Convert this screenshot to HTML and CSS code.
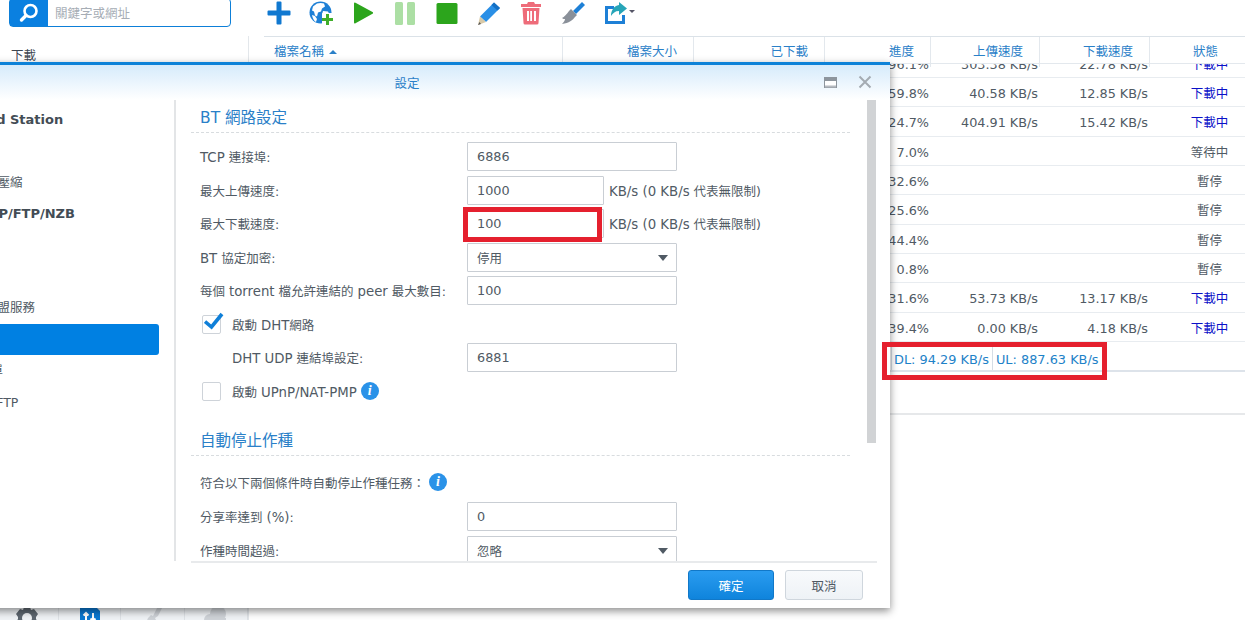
FILE: index.html
```html
<!DOCTYPE html>
<html lang="zh-Hant">
<head>
<meta charset="utf-8">
<title>Download Station</title>
<link rel="stylesheet" href="styles.css">
</head>
<body>
<div class="app">
  <header class="topbar">
    <div class="search">
      <span class="search-btn"><svg width="22" height="22" viewBox="0 0 22 22"><circle cx="12.5" cy="9" r="6" fill="none" stroke="#fff" stroke-width="2.6"/><path d="M8 13.5 3.5 18" stroke="#fff" stroke-width="3.4" stroke-linecap="round"/></svg></span>
      <span class="search-text">關鍵字或網址</span>
    </div>
    <nav class="tools">
      <span class="tool"><svg width="24" height="24" viewBox="0 0 24 24"><path d="M9.5 1.5a1 1 0 0 1 1-1h3a1 1 0 0 1 1 1v8h8a1 1 0 0 1 1 1v3a1 1 0 0 1-1 1h-8v8a1 1 0 0 1-1 1h-3a1 1 0 0 1-1-1v-8h-8a1 1 0 0 1-1-1v-3a1 1 0 0 1 1-1h8z" fill="#1078d0"/></svg></span>
      <span class="tool"><svg width="24" height="24" viewBox="0 0 24 24"><circle cx="11.5" cy="11.5" r="11" fill="#1e80d6"/><path d="M8 2.500c2-.7 5-.8 7 0l1 3-3 2-1 3-3 1-1 4-2-1-1-4-2-1 1-4zM14 10l5 .5 1.500 3-3 4-2.500 2-1-3-1-3zM3 14l3 1 2 3-1 3c-2-1-3.500-4-4-7z" fill="#fff"/><rect x="13" y="12" width="11" height="12" rx="1" fill="#fff"/><path d="M17 13h3v4h4v3h-4v4h-3v-4h-4v-3h4z" fill="#3fae2a"/></svg></span>
      <span class="tool"><svg width="24" height="24" viewBox="0 0 24 24"><path d="M3 2.500a1 1 0 0 1 1.500-.8l17 9.300a1 1 0 0 1 0 1.800l-17 9.500a1 1 0 0 1-1.500-.8z" fill="#2ca51c"/></svg></span>
      <span class="tool"><svg width="24" height="24" viewBox="0 0 24 24"><rect x="2" y="1" width="8" height="23" rx="1.500" fill="#acdfa4"/><rect x="14" y="1" width="8" height="23" rx="1.500" fill="#acdfa4"/></svg></span>
      <span class="tool"><svg width="24" height="24" viewBox="0 0 24 24"><rect x="1.500" y="2" width="21" height="21" rx="1.500" fill="#2ca51c"/></svg></span>
      <span class="tool"><svg width="24" height="24" viewBox="0 0 24 24"><path d="M17 1.500 23 7 9 21 3 15.500z" fill="#2a8fe6"/><path d="M17 1.500 23 7l-2.500 2.500L14.500 4z" fill="#1470c4"/><path d="M3 15.500 9 21l-8 3z" fill="#d8c9a8"/><path d="M2.500 21 1 24l3-1z" fill="#555"/></svg></span>
      <span class="tool"><svg width="24" height="24" viewBox="0 0 24 24"><path d="M9 1h6l1 2h6v3H2V3h6z" fill="#ee6c7a"/><path d="M3.500 7h17l-1 15a1.500 1.500 0 0 1-1.500 1.500H6A1.500 1.500 0 0 1 4.500 22zM8 10v10h2V10zm3.200 0v10h1.800V10zM15 10v10h2V10z" fill="#ee6c7a" fill-rule="evenodd"/></svg></span>
      <span class="tool"><svg width="24" height="24" viewBox="0 0 24 24"><path d="M21 1l3 3-9 9-3-3z" fill="#1e80d6"/><path d="M10 8l6 6-2 2c-2 3-6 6-13 7 2-2 3-4 3-5-1 0-2 0-3-1 2-1 5-4 7-7z" fill="#8a9099"/></svg></span>
      <span class="tool tool-wide"><svg width="32" height="24" viewBox="0 0 32 24"><path d="M3 5h8v3H5v12h14v-6h3v9H2V5z" fill="#1e80d6"/><path d="M16 1l8 6.500-8 6.500v-4c-4 0-6 2-8 5 0-6 3-10 8-11z" fill="#27a5b8"/><path d="M26 9h6l-3 3z" fill="#556"/></svg></span>
    </nav>
  </header>

  <div class="workspace">
    <aside class="nav">
      <div class="nav-item">下載</div>
      <div class="tabs">
        <span class="tab"><svg width="24" height="24" viewBox="0 0 24 24"><path d="M9 1h6l1 3 3-1 4 5-2 3v2l2 3-4 5-3-1-1 3H9l-1-3-3 1-4-5 2-3v-2L1 8l4-5 3 1z" fill="#5e6770"/><circle cx="12" cy="12" r="5" fill="#f0f3f6"/></svg></span>
        <span class="tab"><svg width="22" height="24" viewBox="0 0 22 24"><path d="M1 0h15l5 5v19H1z" fill="#0a78d2"/><path d="M7 7v8M4.500 9.500 7 7l2.500 2.500M14 7v8M11.500 12.500 14 15l2.500-2.500" stroke="#fff" stroke-width="2" fill="none"/></svg></span>
        <span class="tab"><svg width="24" height="24" viewBox="0 0 24 24"><path d="M17 0l4 2-4 8-3 2 6 12H2l5-12 3-3 2 1z" fill="#cfd3d8"/></svg></span>
        <span class="tab"><svg width="24" height="24" viewBox="0 0 24 24"><circle cx="14" cy="8" r="8" fill="#cfd3d8"/><circle cx="6" cy="14" r="6" fill="#cfd3d8"/><rect x="4" y="12" width="18" height="12" fill="#cfd3d8"/></svg></span>
      </div>
    </aside>

    <main class="list">
      <div class="grid thead">
        <div class="th name">檔案名稱 <i class="sort"></i></div>
        <div class="th num">檔案大小</div>
        <div class="th num">已下載</div>
        <div class="th num">進度</div>
        <div class="th num">上傳速度</div>
        <div class="th num">下載速度</div>
        <div class="th state">狀態</div>
      </div>
      <div class="rows">
        <div class="grid row first"><span></span><span></span><span></span><span class="cell">96.1%</span><span class="cell">303.38 KB/s</span><span class="cell">22.78 KB/s</span><span class="status active">下載中</span></div>
        <div class="grid row"><span></span><span></span><span></span><span class="cell">59.8%</span><span class="cell">40.58 KB/s</span><span class="cell">12.85 KB/s</span><span class="status active">下載中</span></div>
        <div class="grid row"><span></span><span></span><span></span><span class="cell">24.7%</span><span class="cell">404.91 KB/s</span><span class="cell">15.42 KB/s</span><span class="status active">下載中</span></div>
        <div class="grid row"><span></span><span></span><span></span><span class="cell">7.0%</span><span></span><span></span><span class="status">等待中</span></div>
        <div class="grid row"><span></span><span></span><span></span><span class="cell">32.6%</span><span></span><span></span><span class="status">暫停</span></div>
        <div class="grid row"><span></span><span></span><span></span><span class="cell">25.6%</span><span></span><span></span><span class="status">暫停</span></div>
        <div class="grid row"><span></span><span></span><span></span><span class="cell">44.4%</span><span></span><span></span><span class="status">暫停</span></div>
        <div class="grid row"><span></span><span></span><span></span><span class="cell">0.8%</span><span></span><span></span><span class="status">暫停</span></div>
        <div class="grid row"><span></span><span></span><span></span><span class="cell">31.6%</span><span class="cell">53.73 KB/s</span><span class="cell">13.17 KB/s</span><span class="status active">下載中</span></div>
        <div class="grid row"><span></span><span></span><span></span><span class="cell">39.4%</span><span class="cell">0.00 KB/s</span><span class="cell">4.18 KB/s</span><span class="status active">下載中</span></div>
      </div>
      <div class="statusbar">
        <span class="rate">DL: 94.29 KB/s</span><span class="rate">UL: 887.63 KB/s</span>
      </div>
      <div class="detail"></div>
    </main>
  </div>

  <section class="dialog">
    <div class="dialog-head">
      <span class="dialog-title">設定</span>
      <span class="win-btns">
        <svg width="13" height="11" viewBox="0 0 13 11"><rect x=".5" y=".5" width="12" height="10" fill="#fff" stroke="#8d959d"/><rect x="1" y="1" width="11" height="3" fill="#8d959d"/><rect x="1" y="8.500" width="11" height="2" fill="#b5bac0"/></svg>
        <svg width="14" height="14" viewBox="0 0 14 14"><path d="M1.500 1.500l11 11M12.500 1.500l-11 11" stroke="#a4abb2" stroke-width="2"/></svg>
      </span>
    </div>
    <div class="dialog-body">
      <div class="side">
        <div class="side-item head">Download Station</div>
        <div class="side-item">一般</div>
        <div class="side-item">自動解壓縮</div>
        <div class="side-item head head-wide">BT/HTTP/FTP/NZB</div>
        <div class="side-item">一般</div>
        <div class="side-item">位置</div>
        <div class="side-item">檔案聯盟服務</div>
        <div class="side-item selected">BT</div>
        <div class="side-item tight">封鎖清單</div>
        <div class="side-item">HTTP/FTP</div>
      </div>
      <div class="form">
        <h2 class="section">BT 網路設定</h2>
        <div class="fields">
          <label class="field"><span class="label"><span class="lat">TCP</span> 連接埠:</span><input class="box" value="6886"></label>
          <label class="field"><span class="label">最大上傳速度:</span><input class="box short" value="1000"><span class="unit"><span class="lat">KB/s (0 KB/s</span> 代表無限制)</span></label>
          <label class="field"><span class="label">最大下載速度:</span><input class="box short" value="100"><span class="unit"><span class="lat">KB/s (0 KB/s</span> 代表無限制)</span></label>
          <div class="field"><span class="label"><span class="lat">BT</span> 協定加密:</span><span class="box select">停用</span></div>
          <label class="field"><span class="label">每個 <span class="lat">torrent</span> 檔允許連結的 <span class="lat">peer</span> 最大數目:</span><input class="box" value="100"></label>
          <div class="field check-row"><span class="check"><svg class="tick" width="20" height="19" viewBox="0 0 20 19"><path d="M1 9.500 7.500 15 18 2" fill="none" stroke="#0f7fd8" stroke-width="3.600"/></svg></span><span>啟動 <span class="lat">DHT</span>網路</span></div>
          <label class="field"><span class="label indented"><span class="lat">DHT UDP</span> 連結埠設定:</span><input class="box" value="6881"></label>
          <div class="field check-row"><span class="check"></span><span>啟動 <span class="lat">UPnP/NAT-PMP</span></span><i class="info">i</i></div>
        </div>
        <h2 class="section second">自動停止作種</h2>
        <div class="fields after">
          <div class="field lead"><span>符合以下兩個條件時自動停止作種任務：</span><i class="info">i</i></div>
          <label class="field"><span class="label">分享率達到 <span class="lat">(%)</span>:</span><input class="box" value="0"></label>
          <div class="field"><span class="label">作種時間超過:</span><span class="box select">忽略</span></div>
        </div>
      </div>
      <div class="scrollbar"></div>
    </div>
    <div class="dialog-foot">
      <button class="btn primary">確定</button>
      <button class="btn">取消</button>
    </div>
  </section>

  <div class="mark mark-input"></div>
  <div class="mark mark-status"></div>
</div>
</body>
</html>
```

FILE: styles.css
```css
* { box-sizing: border-box; }
html, body { margin: 0; height: 100%; }
body {
  font-family: "DejaVu Sans", "Noto Sans CJK TC", sans-serif;
  font-size: 12.8px;
  color: #505a64;
  background: #fff;
  overflow: hidden;
}
.app { position: relative; width: 1245px; height: 620px; overflow: hidden; display: flex; flex-direction: column; }

/* top bar */
.topbar { display: flex; height: 36px; flex: none; }
.search {
  width: 222px; height: 29px; margin: -2px 0 0 9px; flex: none;
  display: flex; align-items: center;
  border: 1px solid #0d7fd8; border-radius: 4px; background: #fff;
}
.search-btn { width: 38px; height: 100%; background: #0a80e0; display: flex; align-items: center; justify-content: center; flex: none; }
.search-text { margin-left: 7px; color: #a6adb5; font-size: 12.5px; }
.tools { display: flex; margin-left: 27px; }
.tool { width: 42px; height: 25px; display: flex; justify-content: center; align-items: center; }
.tool-wide { width: 42px; padding-left: 8px; }

/* page behind the dialog */
.workspace { display: flex; flex: 1; min-height: 0; }
.nav { width: 249px; flex: none; border-right: 1px solid #e3e7eb; display: flex; flex-direction: column; justify-content: space-between; }
.nav-item { padding: 9px 0 0 11px; color: #3d4650; font-size: 12.5px; }
.tabs { display: flex; height: 40px; background: #f0f3f6; overflow: hidden; }
.tab { width: 62px; border-right: 1px solid #dfe3e7; display: flex; justify-content: center; padding-top: 26px; }
.tab:first-child { width: 59px; padding-right: 4px; }
.tab:nth-child(3) { width: 64px; }
.tab:last-child { width: 63px; }
.tab svg { flex: none; }
.list { flex: 1; min-width: 0; margin-left: 15px; display: flex; flex-direction: column; }
.grid { display: grid; grid-template-columns: 299px 131px 131px 106px 109px 110px 95px; }
.thead { height: 28px; border-top: 1px solid #dbe2e8; border-bottom: 1px solid #e3e8ed; }
.th { color: #2a80c8; font-size: 12.5px; line-height: 30px; border-right: 1px solid #e3e8ed; }
.th:last-child { border-right: 0; }
.name { padding-left: 10px; }
.num { text-align: right; padding-right: 16px; }
.state { text-align: center; padding-left: 16px; }
.sort { display: inline-block; border: 4px solid transparent; border-top: 0; border-bottom: 4px solid #2a80c8; vertical-align: 2px; margin-left: 1px; }
.rows { height: 278px; overflow: hidden; flex: none; }
.row { height: 29.34px; line-height: 31px; border-bottom: 1px solid #e8ecf0; }
.row.first { margin-top: -15.34px; }
.cell { text-align: right; padding-right: 2px; white-space: nowrap; }
.status { text-align: center; padding-left: 24px; font-size: 12.5px; }
.status.active { color: #0a10c8; }
.statusbar { height: 30px; flex: none; padding-left: 627px; display: flex; border-bottom: 2px solid #dde3ea; }
.rate { color: #1e82c8; font-size: 12.9px; line-height: 36px; padding: 0 3px 0 2px; border-left: 1px solid #d5dde5; white-space: nowrap; }
.rate:last-child { border-right: 1px solid #d5dde5; padding-left: 3px; }
.detail { height: 43px; flex: none; border-bottom: 2px solid #e6e8ea; }

/* dialog window */
.dialog {
  position: absolute; left: -190px; top: 62px; width: 1080px; height: 546px;
  display: flex; flex-direction: column; background: #fff;
  border-top: 3px solid #0d82d8;
  box-shadow: 0 3px 8px rgba(0, 0, 0, .45);
}
.dialog-head {
  height: 35px; flex: none; position: relative;
  display: flex; justify-content: center; align-items: center;
  background: linear-gradient(#d6ebfb, #fff);
}
.dialog-title { color: #2a80c8; font-size: 12.5px; margin-left: 114px; }
.win-btns { position: absolute; right: 18px; top: 10px; display: flex; gap: 21px; align-items: center; }
.dialog-body { flex: 1; min-height: 0; display: flex; }
.side { width: 366px; flex: none; padding-top: 4px; border-right: 2px solid #e3e5e7; }
.side-item { height: 31.4px; line-height: 32px; padding-left: 150px; white-space: nowrap; color: #505a64; font-size: 12.5px; }
.side-item.tight { padding-left: 143px; }
.side-item.head { padding-left: 123px; font-weight: bold; font-size: 13px; color: #434c55; }
.side-item.head-wide { padding-left: 136px; }
.selected { margin-right: 15px; background: #0080e2; color: #fff; border-radius: 3px; }
.form { flex: 1; min-width: 0; padding: 0 17px 0 15px; overflow: hidden; }
.section {
  height: 33px; margin: 0; padding: 0 0 0 9px;
  border-bottom: 1px dashed #d8dcdf;
  font-size: 15.5px; line-height: 36px; font-weight: normal; color: #2a80c8;
}
.section.second { margin-top: 17px; }
.fields { display: flex; flex-direction: column; gap: 4.5px; margin-top: 9px; padding-left: 9px; }
.fields.after { margin-top: 12px; }
.field { height: 29px; flex: none; display: flex; align-items: center; font-size: 12.5px; }
.field.lead { margin-bottom: 1px; }
.lat { font-size: 13.3px; }
.label { width: 267px; flex: none; white-space: nowrap; }
.indented { padding-left: 32px; }
.box {
  width: 210px; height: 29px; flex: none; padding: 0 9px;
  border: 1px solid #c9ced4; border-radius: 1px; background: #fff;
  font: inherit; font-size: 12.8px; color: #505a64; outline: 0;
}
.box.short { width: 137px; }
.select { display: flex; align-items: center; position: relative; font-size: 12.5px; }
.select::after {
  content: ""; position: absolute; right: 8px; top: 11px;
  border: 5.500px solid transparent; border-bottom: 0; border-top: 6px solid #505a64;
}
.unit { margin-left: 5px; white-space: nowrap; }
.check-row { padding-left: 2px; }
.check { width: 19px; height: 19px; flex: none; position: relative; margin-right: 11px; border: 1px solid #ced3d9; border-radius: 2px; background: #fff; }
.tick { position: absolute; left: 1px; top: -4px; }
.info {
  width: 18px; height: 18px; flex: none; margin-left: 4px; border-radius: 50%;
  background: #2a92e8; color: #fff;
  font: italic bold 14px/18px "Liberation Serif", serif; text-align: center;
}
.scrollbar { width: 9px; height: 343px; margin-right: 14px; flex: none; background: #d1d3d5; }
.dialog-foot {
  height: 47px; flex: none; margin: 0 13px 0 381px;
  border-top: 2px solid #e8eaec;
  display: flex; justify-content: flex-end; align-items: flex-start; gap: 11px; padding: 7px 14px 0 0;
}
.btn {
  width: 78px; height: 30px; border: 1px solid #cfd6dd; border-radius: 3px;
  background: linear-gradient(#f8fafc, #eef2f6);
  font: inherit; font-size: 12.5px; color: #505a64;
}
.btn.primary { width: 86px; border-color: #1178c8; background: linear-gradient(#2a9cf0, #0f84dc); color: #fff; }

/* red annotations drawn over the screenshot */
.mark { position: absolute; border: 5px solid #e5202e; }
.mark-input { left: 463px; top: 207px; width: 139px; height: 35px; }
.mark-status { left: 882px; top: 342px; width: 225px; height: 38px; }
```
